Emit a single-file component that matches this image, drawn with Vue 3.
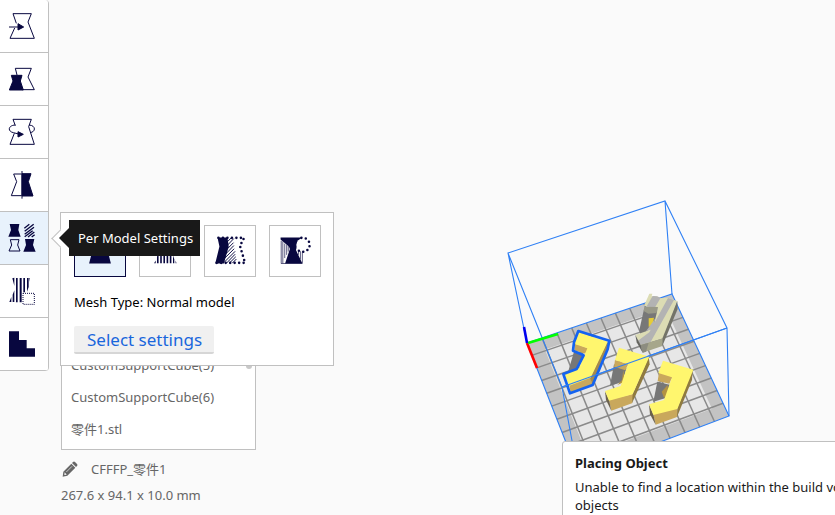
<script setup>
import { ref } from 'vue'

const tools = [
  { id: 'move', label: 'Move' },
  { id: 'scale', label: 'Scale' },
  { id: 'rotate', label: 'Rotate' },
  { id: 'mirror', label: 'Mirror' },
  { id: 'settings', label: 'Per Model Settings' },
  { id: 'blocker', label: 'Support Blocker' },
  { id: 'custom', label: 'Custom Supports' },
]
const activeTool = ref('settings')

const meshTypes = [
  { id: 'normal', label: 'Normal model' },
  { id: 'support', label: 'Print as support' },
  { id: 'overlap', label: 'Modify settings for overlaps' },
  { id: 'infill', label: "Don't support overlaps" },
]
const activeMesh = ref('normal')

const objects = ['CustomSupportCube(5)', 'CustomSupportCube(6)', '零件1.stl']

// Projects build plate coordinates (0..1) onto the canvas.
const plate = [[527, 343], [672, 294], [729, 416], [578, 473]]
function project(u, v) {
  const [[x0, y0], [x1, y1], [x2, y2], [x3, y3]] = plate
  const dx1 = x1 - x2, dx2 = x3 - x2, dx3 = x0 - x1 + x2 - x3
  const dy1 = y1 - y2, dy2 = y3 - y2, dy3 = y0 - y1 + y2 - y3
  const d = dx1 * dy2 - dx2 * dy1
  const g = (dx3 * dy2 - dx2 * dy3) / d
  const h = (dx1 * dy3 - dx3 * dy1) / d
  const w = g * u + h * v + 1
  return [
    ((x1 - x0 + g * x1) * u + (x3 - x0 + h * x3) * v + x0) / w,
    ((y1 - y0 + g * y1) * u + (y3 - y0 + h * y3) * v + y0) / w,
  ]
}
const points = (list) => list.map(([u, v]) => project(u, v).join(',')).join(' ')
const outer = points([[0, 0], [1, 0], [1, 1], [0, 1]])
const inner = points([[0.09, 0.09], [0.92, 0.09], [0.92, 0.91], [0.09, 0.91]])
const cells = 10
const grid = []
for (let i = 1; i < cells; i++) {
  grid.push(points([[i / cells, 0], [i / cells, 1]]))
  grid.push(points([[0, i / cells], [1, i / cells]]))
}
</script>

<template>
  <main class="app">
    <svg class="scene" viewBox="0 0 835 515" preserveAspectRatio="xMidYMid slice" aria-hidden="true">
      <polygon :points="outer" fill="#c3c3c3" />
      <polygon :points="inner" fill="#e7e7e7" />
      <polyline v-for="(line, i) in grid" :key="i" :points="line" stroke="#8a8a8a" stroke-width="1.5" />
      <g fill="none" stroke="#2f80f5" stroke-width="1.1">
        <polygon :points="outer" />
        <path d="M508 253 665 201 727 328 562 387zM508 253 527 343M665 201 672 294M562 387 578 473M727 328 729 416" />
      </g>
      <g fill="none" stroke-width="2.6">
        <path d="M527 343 537 368" stroke="#f00" />
        <path d="M528 343 558 334" stroke="#0f0" />
        <path d="M527 343 524 327" stroke="#00e" />
      </g>
      <g transform="translate(510 285) scale(.3333)">
        <path d="M192 200 222 212 205 250 175 258z" fill="#777" />
        <path d="M195 176 235 190 226 206 193 196zM178 300 242 278 248 300 182 323z" fill="#c9a85c" />
        <path d="M292 170 296 190 248 300 240 278z" fill="#a58a4c" />
        <path d="M205 142 293 170 242 278 178 302 163 268 207 250 232 190 194 177z" fill="#fff66e" />
        <path d="M205 138 298 167 293 193 248 300 180 325 160 267 200 252 221 211 189 197 192 172z" fill="none" stroke="#1463f0" stroke-width="8" stroke-linejoin="round" />
      </g>
      <g transform="translate(600 285) scale(.3333)">
        <path d="M42 238 80 250 66 290 30 302z" fill="#777" />
        <path d="M70 255 66 285 52 300 74 290z" fill="#b39242" />
        <path d="M45 225 85 237 76 256 42 245zM27 344 102 326 96 355 34 377z" fill="#c9a85c" />
        <path d="M146 215 149 238 96 355 98 328z" fill="#8f7a40" />
        <path d="M15 318 27 344 34 377 18 345z" fill="#6b614c" />
        <path d="M57 188 148 215 98 328 27 347 15 318 62 303 84 238 45 225z" fill="#fff66e" />
        <path d="M172 290 212 300 200 338 160 350z" fill="#777" />
        <path d="M203 300 185 320 192 338 204 330z" fill="#b39242" />
        <path d="M177 262 217 275 208 296 173 288zM160 388 232 370 231 396 167 419z" fill="#c9a85c" />
        <path d="M278 252 276 285 231 396 232 370z" fill="#8f7a40" />
        <path d="M147 358 160 388 167 419 150 388z" fill="#6b614c" />
        <path d="M189 227 280 254 232 372 160 390 147 358 192 345 216 277 175 264z" fill="#fff66e" />
        <path d="M133 68 172 78 172 110 122 155 118 135z" fill="#777" />
        <path d="M146 100 162 98 158 120 146 126z" fill="#e5cc38" />
        <path d="M148 26 157 26 155 34 171 34 178 40 203 38 232 48 190 160 122 180 106 150 158 132 174 70 132 62z" fill="#dcdcb4" />
        <path d="M158 33 171 34 182 38 164 69 140 64zM204 39 222 45 152 171 122 180 114 167 148 142zM166 100 158 132 138 139z" fill="#b3b3b3" />
        <path d="M133 65 174 66 170 84 145 86 131 78z" fill="#999988" />
        <path d="M122 180 190 160 187 183 128 203z" fill="#a6a68b" />
        <path d="M122 180 146 173 138 200 128 203z" fill="#8c8c80" />
        <path d="M232 48 233 72 187 183 188 158z" fill="#737368" />
        <path d="M106 150 122 180 128 203 110 172z" fill="#656560" />
      </g>
      <path d="M562 387 727 328" stroke="#2f80f5" stroke-width="1.1" />
    </svg>

    <nav class="toolbar" aria-label="Tools">
      <button
        v-for="tool in tools"
        :key="tool.id"
        type="button"
        class="tool"
        :class="{ active: activeTool === tool.id }"
        :aria-label="tool.label"
        @click="activeTool = tool.id"
      >
        <svg viewBox="0 0 144 156" class="tool-icon">
          <g v-if="tool.id === 'move'" class="line">
            <path d="M49 70 39 41H94L84 66 103 115H30L44 84M27 81H58" />
            <path d="M54 71 71 81 54 90z" class="solid" />
          </g>
          <g v-else-if="tool.id === 'scale'" class="line">
            <path d="M51 66 46 46H94L84 72 103 110H66" />
            <path d="M34 67H66L61 84 70 111H28L39 84z" class="solid" />
          </g>
          <g v-else-if="tool.id === 'rotate'" class="line">
            <path d="M46 59 39 40H94L86 62 103 115H30L43 82" />
            <path d="M46 57C24 58 22 76 40 80L60 85M87 57C108 58 108 78 90 80" />
            <path d="M54 77 70 85 54 93z" class="solid" />
          </g>
          <g v-else-if="tool.id === 'mirror'" class="line">
            <path d="M65 45H41L50 68 34 110H65M66 36V119" />
            <path d="M66 44H93L85 68 99 111H66z" class="solid" />
          </g>
          <g v-else-if="tool.id === 'settings'">
            <path d="M29 36H58L55 54 62 74H25L33 54z" />
            <path d="M75 81H103L99 99 107 119H70L78 99z" />
            <path d="M31 83H57L53 99 60 117H27L35 99z" class="line" />
            <path d="M73 49 88 37M74 58 101 37M74 67 102 46M74 74 98 56M84 75 103 60M95 75 104 68" class="line hatch" />
          </g>
          <g v-else-if="tool.id === 'blocker'">
            <path d="M37 40 43 38V63zM48 39H53V112H48zM59 39H65V112H59zM70 39H75V82H70zM81 39H86V66L81 80zM90 39 88 51V39zM38 89 43 76V111H38zM28 111 34 96V111z" />
            <path d="M69 85H103V118H69z" class="line dotted" />
          </g>
          <path v-else d="M27 40H57V66H80V91H105V116H27z" />
        </svg>
      </button>
    </nav>

    <section class="settings-panel" aria-label="Per Model Settings">
      <span class="pointer"></span>
      <div class="mesh-types">
        <button
          v-for="mesh in meshTypes"
          :key="mesh.id"
          type="button"
          class="mesh"
          :class="{ active: activeMesh === mesh.id }"
          :aria-label="mesh.label"
          @click="activeMesh = mesh.id"
        >
          <svg viewBox="0 0 156 156" class="mesh-icon">
            <path v-if="mesh.id === 'normal'" d="M49 36H106L98 62 112 117H44L58 62z" />
            <path v-else-if="mesh.id === 'support'" d="M44 116 49 108V116zM53 96 58 84V116H53zM63 36H68V116H63zM73 36H78V116H73zM83 36H88V116H83zM93 36H98V116H93zM103 92 107 104V116H103zM111 116V108L114 116z" />
            <g v-else-if="mesh.id === 'overlap'">
              <path d="M39 36H70L74 64 59 117H32L45 64z" />
              <path d="M69 50 82 37M71 59 90 39M69 72 89 52M65 87 90 61M60 102 91 71M59 114 94 79M67 116 94 88M76 116 96 96M85 116 98 103" class="line diagonal" />
              <path d="M42 37H122L109 62 125 115H34" class="line beads" />
            </g>
            <g v-else>
              <path d="M33 36H98L85 60 81 75 101 117H47L62 72 59 64 33 42z" />
              <path d="M35 46V116M40 48V116M46 55V100M52 58V90M34 117H101M57 61V80M101 80V116M95 77V104M89 75V90" class="line fine" />
              <circle cx="103" cy="59" r="21" fill="#fff" />
              <path d="M98 37A22 22 0 1 1 87 75" class="line beads" />
            </g>
          </svg>
        </button>
      </div>
      <p class="mesh-label">Mesh Type: Normal model</p>
      <button type="button" class="select">Select settings</button>
      <div class="tooltip" role="tooltip">Per Model Settings</div>
    </section>

    <section class="objects">
      <div class="list-box">
        <ul class="list">
          <li v-for="name in objects" :key="name">{{ name }}</li>
        </ul>
        <span class="scroll-thumb"></span>
      </div>
      <div class="job">
        <svg class="pencil" viewBox="0 0 48 48" aria-hidden="true">
          <path d="M33 3Q36 0 39 3L45 9Q48 12 45 15L42 18 30 6zM28 8 40 20 16 44 2 47 4 32zM8 34 7 42 14 41z" fill-rule="evenodd" />
          <path d="M13 33 30 16" stroke="#fafafa" stroke-width="2" />
        </svg>
        <span>CFFFP_零件1</span>
      </div>
      <p class="size">267.6 x 94.1 x 10.0 mm</p>
    </section>

    <aside class="message" role="status">
      <h2>Placing Object</h2>
      <p>Unable to find a location within the build volume for all objects</p>
    </aside>
  </main>
</template>

<style>
body {
  margin: 0;
  background: #fafafa;
}
</style>

<style scoped>
.app {
  position: relative;
  display: flex;
  align-items: flex-start;
  gap: 12px;
  min-height: 100vh;
  overflow: hidden;
  color: #191919;
  font: 13px/18px "Noto Sans", "Noto Sans CJK SC", sans-serif;
}
p, h2, ul {
  margin: 0;
  padding: 0;
}
button {
  padding: 0;
  font: inherit;
  cursor: pointer;
}
.scene {
  position: absolute;
  inset: 0;
  width: 100%;
  height: 100%;
}
.toolbar {
  position: relative;
  display: flex;
  flex-direction: column;
  border-right: 1px solid #c0c0c0;
  border-radius: 0 4px 4px 0;
  overflow: hidden;
}
.tool {
  display: block;
  border: 0;
  border-bottom: 1px solid #c0c0c0;
  background: #fff;
}
.tool.active,
.mesh.active {
  background: #e8f2fc;
}
.tool-icon {
  display: block;
  width: 48px;
  height: 52px;
  fill: #08073f;
}
.line {
  fill: none;
  stroke: #08073f;
  stroke-width: 3;
}
.solid {
  fill: #08073f;
}
.hatch {
  stroke-width: 4;
}
.fine {
  stroke-width: 2;
}
.diagonal {
  stroke-width: 3;
}
.dotted {
  stroke-dasharray: 3 3;
}
.beads {
  stroke-width: 8;
  stroke-linecap: round;
  stroke-dasharray: 0 14;
}
.settings-panel {
  position: absolute;
  z-index: 2;
  left: 60px;
  top: 212px;
  padding: 12px 12px 11px 13px;
  border: 1px solid #c0c0c0;
  background: #fff;
}
.pointer {
  position: absolute;
  left: -7px;
  top: 19px;
  width: 12px;
  height: 12px;
  border: 1px solid #c0c0c0;
  border-width: 0 0 1px 1px;
  background: #fff;
  transform: rotate(45deg);
}
.mesh-types {
  display: flex;
  gap: 13px;
}
.mesh {
  border: 1px solid #c0c0c0;
  background: #fff;
}
.mesh.active {
  border-color: #08073f;
}
.mesh-icon {
  display: block;
  width: 50px;
  height: 50px;
  fill: #08073f;
}
.mesh-label {
  padding: 16px 0 15px;
  color: #000;
}
.select {
  display: block;
  padding: 2px 12px 1px 13px;
  border: 0;
  border-bottom: 2px solid #d6d6d6;
  border-radius: 2px;
  background: #f0f0f0;
  color: #1966dc;
  font-size: 17px;
  line-height: 23px;
}
.tooltip {
  position: absolute;
  left: 8px;
  top: 7px;
  padding: 9px 7px 9px 9px;
  background: #191919;
  color: #fff;
  white-space: nowrap;
}
.tooltip::before {
  content: "";
  position: absolute;
  left: -10px;
  top: 8px;
  border: solid transparent;
  border-width: 10px 10px 10px 0;
  border-right-color: #191919;
}
.objects {
  position: relative;
  align-self: flex-end;
  display: flex;
  flex-direction: column;
  padding-bottom: 11px;
  color: #666;
}
.list-box {
  position: relative;
  width: 193px;
  padding: 0 0 4px;
  border: 1px solid #c0c0c0;
  background: #fff;
}
.list {
  list-style: none;
}
.list li {
  padding: 7px 9px;
}
.scroll-thumb {
  position: absolute;
  right: 3px;
  top: 0;
  width: 6px;
  height: 20px;
  border-radius: 3px;
  background: #c8c8c8;
}
.job {
  display: flex;
  align-items: center;
  gap: 13px;
  padding: 10px 0 8px 1px;
}
.pencil {
  width: 16px;
  height: 16px;
  fill: #666;
}
.message {
  position: absolute;
  z-index: 2;
  left: 562px;
  top: 441px;
  box-sizing: border-box;
  width: 400px;
  padding: 12px 12px 16px;
  border: 1px solid #c0c0c0;
  border-radius: 3px;
  background: #fff;
}
.message h2 {
  padding-bottom: 6px;
  font-size: 13px;
  font-weight: 700;
}
</style>
